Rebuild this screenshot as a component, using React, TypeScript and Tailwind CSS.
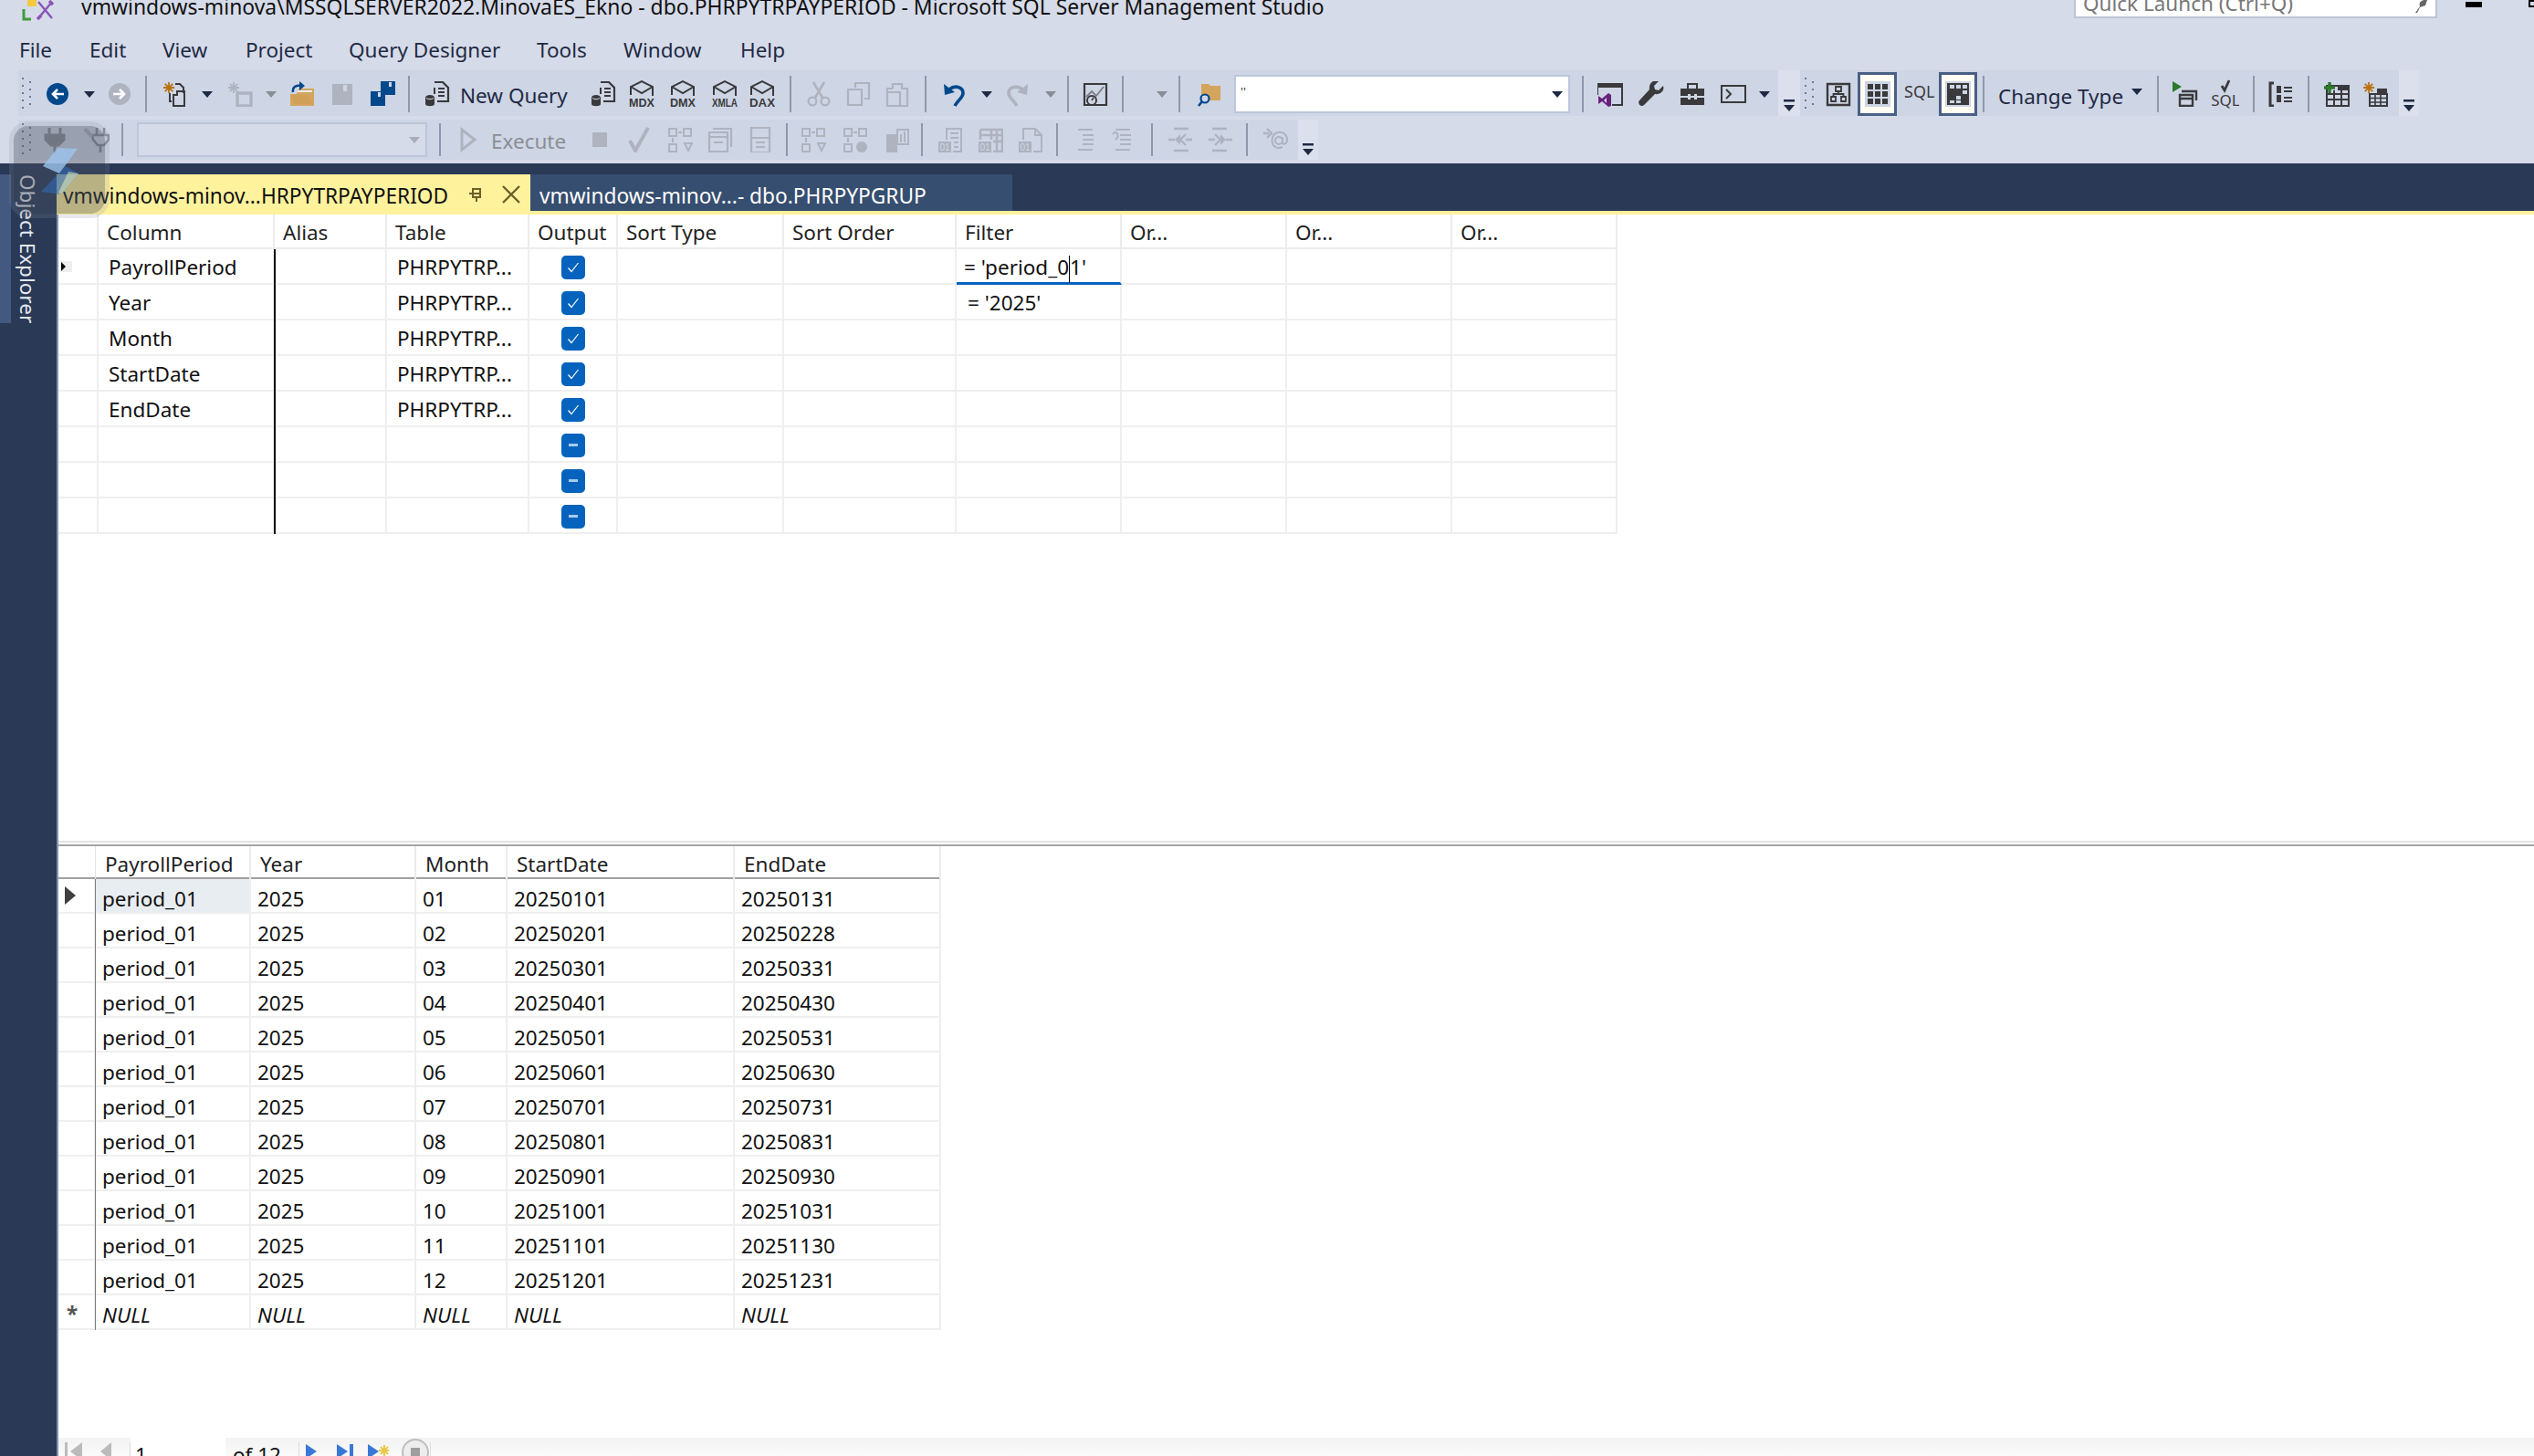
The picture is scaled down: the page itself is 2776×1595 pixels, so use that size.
import type { ReactNode } from 'react'

const DARK = '#3a3a3c'
const OFF = '#aeb3bf'
const BLUE = '#00488c'
const TAN = '#d4a55c'
const ORANGE = '#b8720f'

const LAST = ['31', '28', '31', '30', '31', '30', '31', '31', '30', '31', '30', '31']
const RESULTS = LAST.map((d, i) => {
  const mm = String(i + 1).padStart(2, '0')
  return { month: mm, start: `2025${mm}01`, end: `2025${mm}${d}` }
})
const DESIGN = ['PayrollPeriod', 'Year', 'Month', 'StartDate', 'EndDate', '', '', '']

function I({ className, children }: { className?: string; children: ReactNode }) {
  return <svg className={`w-[28px] h-[28px] shrink-0 ${className ?? ''}`} viewBox="0 0 28 28" fill="none">{children}</svg>
}
type P = { className?: string; c?: string }

function Sep({ className }: { className?: string }) {
  return <div className={`w-[2px] h-[40px] shrink-0 bg-[#8d98ae] ${className ?? ''}`} />
}
function Sep2({ className }: { className?: string }) {
  return <div className={`w-[2px] h-[36px] shrink-0 bg-[#8d98ae] ${className ?? ''}`} />
}
function Dd({ className, c = '#1e2a44' }: P) {
  return <svg className={`w-[12px] h-[7px] shrink-0 ${className ?? ''}`} viewBox="0 0 12 7"><path d="M0 0h12L6 7z" fill={c} /></svg>
}
function Grip({ className }: { className?: string }) {
  return (
    <svg className={`w-[10px] h-[36px] shrink-0 ${className ?? ''}`} viewBox="0 0 10 36" fill="#6f7a92">
      {[0, 8, 16, 24, 32].map(y => <rect key={y} x="0" y={y} width="2" height="2" />)}
      {[4, 12, 20, 28].map(y => <rect key={y} x="8" y={y} width="2" height="2" />)}
    </svg>
  )
}
function Overflow({ className }: { className?: string }) {
  return (
    <svg className={`w-[14px] h-[14px] shrink-0 ${className ?? ''}`} viewBox="0 0 14 14">
      <rect x="1" y="0" width="12" height="2.5" fill="#1e2a44" />
      <path d="M1 6h12l-6 7z" fill="#1e2a44" />
    </svg>
  )
}

function Circle({ className, c = BLUE, dir = 'l' }: P & { dir?: string }) {
  return (
    <I className={className}>
      <circle cx="14" cy="14" r="12" fill={c} />
      <path d={dir === 'l' ? 'M21 14H9M14 9l-5 5 5 5' : 'M7 14h12M14 9l5 5-5 5'} stroke="#fff" strokeWidth="2.6" />
    </I>
  )
}
function Star({ x, y, c = ORANGE }: { x: number; y: number; c?: string }) {
  return <path d={`M${x} ${y - 6}v12M${x - 6} ${y}h12M${x - 4.2} ${y - 4.2}l8.4 8.4M${x - 4.2} ${y + 4.2}l8.4-8.4`} stroke={c} strokeWidth="1.8" />
}
function NewProj({ className }: P) {
  return (
    <I className={className}>
      <Star x={7} y={7} />
      <path d="M14 3h5l4 4v6M12 27h12V11h-8v4h-4zM8 13v9h2" stroke={DARK} strokeWidth="2" />
    </I>
  )
}
function NewProjOff({ className }: P) {
  return (
    <I className={className}>
      <Star x={7} y={7} c={OFF} />
      <path d="M11 13h15v14H11z" stroke={OFF} strokeWidth="3.4" />
    </I>
  )
}
function OpenFolder({ className }: P) {
  return (
    <I className={className}>
      <path d="M1 27V14h7l2-6h17v19z" fill={TAN} />
      <path d="M9 10h16v2H9z" fill="#e9edf5" />
      <path d="M2 15h17l7 10H5z" fill="#d0a058" />
      <path d="M4 12C3 6 8 4 13 5" stroke={BLUE} strokeWidth="2.4" />
      <path d="M11 0l6 5-6 5z" fill={BLUE} />
    </I>
  )
}
function Floppy({ className, c = OFF }: P) {
  return (
    <I className={className}>
      <path d="M3 3h22v23H3zM15 4v7h4V4z" fill={c} fillRule="evenodd" />
    </I>
  )
}
function SaveAll({ className }: P) {
  return (
    <I className={className}>
      <path d="M12 0h16v15H12zM21 1v5h3V1z" fill={BLUE} fillRule="evenodd" />
      <path d="M1 11h16v16H1zM9 12v5h3v-5z" fill={BLUE} fillRule="evenodd" />
    </I>
  )
}
function Query({ className }: P) {
  return (
    <I className={className}>
      <path d="M11 1h9l6 6v15H14" stroke={DARK} strokeWidth="2.2" />
      <path d="M11 7v7M15 8h7M15 12h7M15 16h7" stroke={DARK} strokeWidth="2" />
      <path d="M1 18c0-4 10-4 10 0v7c0 3-10 3-10 0z" fill={DARK} />
      <path d="M2 18.5c2 1.6 6 1.6 8 0" stroke="#d0d7e6" strokeWidth="1" />
    </I>
  )
}
function Cube({ className, t }: P & { t: string }) {
  return (
    <svg className={`w-[34px] h-[32px] shrink-0 ${className ?? ''}`} viewBox="0 0 34 32" fill="none">
      <path d="M5 17V8l12-6 12 6v10M5 8l12 7 12-7" stroke={DARK} strokeWidth="2" />
      <text x="17" y="30" textAnchor="middle" fontSize="12.500" fontWeight="700" textLength="28" lengthAdjust="spacingAndGlyphs" fill={DARK} fontFamily="'Liberation Sans',sans-serif">{t}</text>
    </svg>
  )
}
function Cut({ className }: P) {
  return (
    <I className={className}>
      <path d="M8 1l10 17M20 1L10 18" stroke={OFF} strokeWidth="2.6" />
      <circle cx="7" cy="22" r="4.4" stroke={OFF} strokeWidth="2.2" />
      <circle cx="21" cy="22" r="4.4" stroke={OFF} strokeWidth="2.2" />
    </I>
  )
}
function Copy({ className }: P) {
  return (
    <I className={className}>
      <path d="M11 7V2h15v17h-5M3 9h15v17H3z" stroke={OFF} strokeWidth="2.2" />
    </I>
  )
}
function Paste({ className }: P) {
  return (
    <I className={className}>
      <path d="M9 8V3h10v5h6v19h-7M3 12h14v15H3z M3 12V8h6" stroke={OFF} strokeWidth="2.2" />
    </I>
  )
}
function Undo({ className, c = BLUE, flip }: P & { flip?: boolean }) {
  return (
    <I className={className}>
      <g transform={flip ? 'translate(28 0) scale(-1 1)' : undefined}>
        <path d="M9 9c6-5 15-3 15 4 0 5-6 8-9 14" stroke={c} strokeWidth="3.6" />
        <path d="M3 3l1 12 11-3z" fill={c} />
      </g>
    </I>
  )
}
function Monitor({ className }: P) {
  return (
    <I className={className}>
      <path d="M2 3h24v23H2z" stroke={DARK} strokeWidth="2.2" />
      <path d="M4 17l6-6 5 5 8-10" stroke="#7a7d85" strokeWidth="1.8" />
      <circle cx="10" cy="21" r="5" fill="#d0d7e6" stroke={DARK} strokeWidth="2" />
      <path d="M10 21l2-3" stroke={DARK} strokeWidth="1.6" />
    </I>
  )
}
function FolderFind({ className }: P) {
  return (
    <I className={className}>
      <path d="M5 3h8l2 2h11v16H5z" fill={TAN} />
      <circle cx="9" cy="19" r="4.5" fill="#d0d7e6" stroke={BLUE} strokeWidth="2.2" />
      <path d="M6 22l-4 5" stroke={BLUE} strokeWidth="2.6" />
    </I>
  )
}
function VsIcon({ className }: P) {
  return (
    <I className={className}>
      <path d="M0 2h28v5H0z" fill={DARK} />
      <path d="M0 7v8M27 7v19H16" stroke={DARK} strokeWidth="2" />
      <path d="M1 16l4 3 7-6 3 2v12l-3 1-7-6-4 3z" fill="#68217a" />
      <path d="M10 18l-3 3 3 3z" fill="#d0d7e6" />
    </I>
  )
}
function Wrench({ className }: P) {
  return (
    <I className={className}>
      <path d="M27 5l-5 5-4-1-1-4 5-5c-6-2-11 2-10 9L1 21c-2 2 0 6 2 6 1 0 2 0 3-1L18 14c6 1 11-4 9-9z" fill={DARK} />
    </I>
  )
}
function Toolbox({ className }: P) {
  return (
    <I className={className}>
      <path d="M9 8V3h10v5" stroke={DARK} strokeWidth="2" />
      <path d="M1 8h26v8h-8v-2h-3v2h-4v-2H9v2H1zM1 18h8v2h3v-2h4v2h3v-2h8v8H1z" fill={DARK} />
    </I>
  )
}
function Cmd({ className }: P) {
  return (
    <I className={className}>
      <path d="M1 5h26v18H1z" stroke={DARK} strokeWidth="2" />
      <path d="M6 9l5 5-5 5" stroke={DARK} strokeWidth="2" />
    </I>
  )
}
function Tree({ className }: P) {
  return (
    <I className={className}>
      <path d="M2 3h24v23H2z" stroke={DARK} strokeWidth="2.4" />
      <path d="M11 6h6v5h-6zM6 17h5v5H6zM17 17h5v5h-5zM14 11v3M8.5 17v-3h11v3" stroke={DARK} strokeWidth="1.8" />
    </I>
  )
}
function Dots() {
  return (
    <I>
      <rect width="28" height="28" fill="#cdd5e4" />
      {[3, 11, 19].flatMap(y => [3, 11, 19].map(x => <rect key={`${x}-${y}`} x={x} y={y} width="6" height="6" fill={DARK} />))}
    </I>
  )
}
function ResultsIcon() {
  return (
    <I>
      <rect width="28" height="28" fill="#cdd5e4" />
      <rect x="2" y="2" width="24" height="24" fill={DARK} />
      <path d="M5 4h5v4H5zM12 4h5v4h-5zM19 4h5v4h-5zM19 10h5v4h-5zM12 16h5v4h-5zM5 21h5v3H5zM12 21h5v3h-5z" fill="#cdd5e4" />
    </I>
  )
}
function RunFile({ className }: P) {
  return (
    <I className={className}>
      <path d="M0 0l10 6-10 6z" fill="#2c7a2c" />
      <path d="M10 11h16v10M8 15h14v12H8zM8 19h14" stroke={DARK} strokeWidth="2.4" />
    </I>
  )
}
function SqlCheck({ className }: P) {
  return (
    <svg className={`w-[30px] h-[32px] shrink-0 ${className ?? ''}`} viewBox="0 0 30 32" fill="none">
      <path d="M11 7l3 5 5-11" stroke={DARK} strokeWidth="2.8" />
      <text x="15" y="29" textAnchor="middle" fontSize="17" fill={DARK} fontFamily="'Noto Sans',sans-serif">SQL</text>
    </svg>
  )
}
function Brackets({ className }: P) {
  return (
    <I className={className}>
      <path d="M6 2H2v25h4" stroke={DARK} strokeWidth="3" />
      <path d="M9 5h5v8H9zM9 15h5v8H9z" fill={DARK} />
      <path d="M17 7h9M17 11h9M17 18h9M17 22h9" stroke={DARK} strokeWidth="2" />
    </I>
  )
}
function AddTable({ className }: P) {
  return (
    <I className={className}>
      <path d="M3 5h24v22H3z" fill="none" stroke={DARK} strokeWidth="2" />
      <path d="M15 5h12v5H15z" fill={DARK} />
      <path d="M3 14h24M3 20h24M11 10v17M19 10v17" stroke={DARK} strokeWidth="2" />
      <path d="M0 7h12M6 1v12" stroke="#2c7a2c" strokeWidth="3.4" />
    </I>
  )
}
function NewTable({ className }: P) {
  return (
    <I className={className}>
      <Star x={7} y={7} />
      <path d="M8 14h19v13H8z" stroke={DARK} strokeWidth="2" />
      <path d="M16 8h11v6H16z" fill={DARK} />
      <path d="M8 18.500h19M8 23h19M14 14v13M20 14v13" stroke={DARK} strokeWidth="1.6" />
    </I>
  )
}

/* disabled icons of the second toolbar */
function Plug({ className }: P) {
  return (
    <I className={className}>
      <path d="M8 1v7M20 1v7M4 9h20v5l-6 6h-8l-6-6zM14 20v8" stroke="#8b8f9b" strokeWidth="3" />
      <path d="M5 10h18v4l-6 5h-6l-6-5z" fill="#8b8f9b" />
    </I>
  )
}
function PlugOff({ className }: P) {
  return (
    <I className={className}>
      <path d="M14 1v7M22 1v7M9 9h18v5l-5 6h-7l-5-6zM18 20v8" stroke="#8b8f9b" strokeWidth="2.6" />
      <path d="M1 2l8 9" stroke={OFF} strokeWidth="4" />
    </I>
  )
}
function Link1({ className }: P) {
  return (
    <I className={className}>
      <path d="M2 2h8v8H2zM18 2h8v8h-8zM2 19h8v8H2zM6 17v-5M12 6h4" stroke={OFF} strokeWidth="2" />
      <path d="M19 18l4 8 4-8z" stroke={OFF} strokeWidth="2" />
    </I>
  )
}
function Link2({ className }: P) {
  return (
    <I className={className}>
      <path d="M2 2h8v8H2zM18 2h8v8h-8zM2 19h8v8H2zM6 17v-5M12 6h4" stroke={OFF} strokeWidth="2" />
      <circle cx="21" cy="22" r="6" fill={OFF} />
    </I>
  )
}
function Panes({ className }: P) {
  return (
    <I className={className}>
      <path d="M6 2h20v20M2 6h20v21H2zM2 11h20M7 17h10" stroke={OFF} strokeWidth="2.2" />
    </I>
  )
}
function Form({ className }: P) {
  return (
    <I className={className}>
      <path d="M4 1h20v27H4zM4 12h20M9 17h10M9 22h10" stroke={OFF} strokeWidth="2.2" />
    </I>
  )
}
function Server({ className }: P) {
  return (
    <I className={className}>
      <path d="M3 8h12v20H3z" fill={OFF} />
      <path d="M15 3h12v16H15zM19 8v9M23 5v12" stroke={OFF} strokeWidth="2" />
    </I>
  )
}
function Bin({ className, v }: P & { v: number }) {
  return (
    <I className={className}>
      <rect x="1" y="16" width="14" height="12" fill={OFF} />
      <text x="8" y="26" textAnchor="middle" fontSize="10" fill="#d0d7e6" fontFamily="'Liberation Sans',sans-serif">01</text>
      {v === 0 && <path d="M10 14V2h16v25H17M14 7h9M14 12h9M18 17h5M18 22h5" stroke={OFF} strokeWidth="2" />}
      {v === 1 && <path d="M3 3h24v24H17M3 3v11M3 9h24M15 3v11M21 3v24M17 16h10" stroke={OFF} strokeWidth="2.6" />}
      {v === 2 && <path d="M6 14V2h13l7 7v18H17M19 2v7h7" stroke={OFF} strokeWidth="2" />}
    </I>
  )
}
function Lines({ className, arrow }: P & { arrow?: boolean }) {
  return (
    <I className={className}>
      <path d="M5 3h16M10 9h12M10 14h12M10 19h12M5 25h16" stroke={OFF} strokeWidth="2" />
      {arrow && <path d="M2 8c3-5 7 0 5 4l-2 2" stroke={OFF} strokeWidth="2" />}
    </I>
  )
}
function Indent({ className, flip }: P & { flip?: boolean }) {
  return (
    <I className={className}>
      <g transform={flip ? 'translate(28 0) scale(-1 1)' : undefined}>
        <path d="M7 2h16M7 26h16M1 14h7M20 14h7M20 8l-6 6 6 6" stroke={OFF} strokeWidth="2.4" />
        <path d="M14 8l-6 6 6 6z" fill={OFF} />
      </g>
    </I>
  )
}
function AtMail({ className }: P) {
  return (
    <I className={className}>
      <path d="M1 7h6M5 2l5 5-5 5" stroke={OFF} strokeWidth="2.4" />
      <circle cx="18" cy="15" r="4" stroke={OFF} strokeWidth="2" />
      <path d="M22 11v6c0 3 5 2 5-3 0-6-5-9-10-8-6 1-8 9-5 14 2 3 6 4 10 2" stroke={OFF} strokeWidth="2" />
    </I>
  )
}

function CheckBox({ on }: { on: boolean }) {
  return (
    <div className="w-[26px] h-[26px] rounded-[5px] bg-[#0563bd] flex items-center justify-center">
      {on ? (
        <svg className="w-[16px] h-[16px]" viewBox="0 0 16 16" fill="none"><path d="M2.500 8.500l3.500 4L13.500 3" stroke="#fff" strokeWidth="1.2" /></svg>
      ) : (
        <div className="w-[10px] h-[3px] bg-[#a9cbeb]" />
      )}
    </div>
  )
}

const DC = 'border-r-2 border-b-2 border-[#efefef]'
const HEAD = 'pl-[9px] border-r-2 border-b-2 border-[#ececec] leading-[40px]'

function DesignGrid() {
  return (
    <div className="relative grid grid-cols-[44px_193px_123px_156px_97px_182px_189px_181px_181px_181px_181px] grid-rows-[38px] auto-rows-[39px] w-[1708px] text-[22.5px] leading-[40px] text-[#111]">
      <div className={HEAD} />
      {['Column', 'Alias', 'Table', 'Output', 'Sort Type', 'Sort Order', 'Filter', 'Or...', 'Or...', 'Or...'].map((h, i) => (
        <div key={i} className={`${HEAD} text-[#1f1f1f]`}>{h}</div>
      ))}
      {DESIGN.map((name, r) => (
        <div key={r} className="contents">
          <div className={`${DC} flex items-center pl-[2px]`}>
            {r === 0 && (
              <div className="w-[13px] h-[12px] bg-[#eeeeee] flex items-center">
                <div className="w-0 h-0 border-y-[5px] border-y-transparent border-l-[5px] border-l-black ml-[1px]" />
              </div>
            )}
          </div>
          <div className={`${DC} pl-[11px]`}>{name}</div>
          <div className={DC} />
          <div className={`${DC} pl-[11px]`}>{name ? 'PHRPYTRP...' : ''}</div>
          <div className={`${DC} flex items-center justify-center pl-[1px] pt-[2px]`}><CheckBox on={name !== ''} /></div>
          <div className={DC} />
          <div className={DC} />
          {r === 0 ? (
            <div className="border-r-2 border-r-[#efefef] border-b-[3px] border-b-[#0563bd] pl-[8px] whitespace-pre">= 'period_0<span className="inline-block w-[1px] h-[30px] bg-black align-middle" />1'</div>
          ) : (
            <div className={`${DC} pl-[12px] whitespace-pre`}>{r === 1 ? "= '2025'" : ''}</div>
          )}
          <div className={DC} />
          <div className={DC} />
          <div className={DC} />
        </div>
      ))}
      {/* frozen column divider */}
      <div className="absolute left-[236px] top-[38px] bottom-0 w-[2px] bg-[#111]" />
    </div>
  )
}

const RC = 'border-r-2 border-b-2 border-[#efefef] pl-[7px] pt-[5px]'

function ResultRow({ cells, selected, marker, italic }: { cells: string[]; selected?: boolean; marker?: ReactNode; italic?: boolean }) {
  return (
    <div className={`contents ${italic ? 'italic' : ''}`}>
      <div className="border-r-2 border-b-2 border-[#efefef] flex items-center pl-[7px]">{marker}</div>
      {cells.map((t, i) => (
        <div key={i} className={`${RC} ${selected && i === 0 ? 'bg-[#e8edf1]' : ''}`}>{t}</div>
      ))}
    </div>
  )
}

function ResultGrid() {
  return (
    <div className="w-[967px] text-[22.5px] leading-[34px] text-[#111]">
      <div className="grid grid-cols-[41px_170px_181px_100px_249px_226px] h-[36px] border-b-2 border-b-[#a0a0a0] text-[#1f1f1f]">
        <div className="border-r border-[#e4e4e4]" />
        {['PayrollPeriod', 'Year', 'Month', 'StartDate', 'EndDate'].map(h => (
          <div key={h} className="border-r-2 border-[#ececec] pl-[10px] pt-[3px]">{h}</div>
        ))}
      </div>
      <div className="relative grid grid-cols-[41px_170px_181px_100px_249px_226px] auto-rows-[38px]">
        {RESULTS.map((r, i) => (
          <ResultRow
            key={r.month}
            selected={i === 0}
            marker={i === 0 ? <div className="w-0 h-0 border-y-[10px] border-y-transparent border-l-[12px] border-l-[#404040]" /> : null}
            cells={['period_01', '2025', r.month, r.start, r.end]}
          />
        ))}
        <ResultRow italic marker={<span className="not-italic font-bold text-[#555] pl-[2px] pt-[5px]">*</span>} cells={['NULL', 'NULL', 'NULL', 'NULL', 'NULL']} />
        <div className="absolute left-[40px] top-0 bottom-0 w-[1px] bg-[#7d7d7d]" />
      </div>
    </div>
  )
}

function NavBar() {
  return (
    <div className="h-[20px] shrink-0 overflow-hidden bg-gradient-to-b from-[#f3f3f3] to-[#fafafa] flex items-start text-[22.5px] leading-[26px] text-[#111]">
      <svg className="w-[22px] h-[20px] ml-[6px] mt-[5px] shrink-0" viewBox="0 0 22 20"><path d="M1 0h3v20H1zM20 0v20L7 10z" fill="#bbbbbb" /></svg>
      <svg className="w-[16px] h-[20px] ml-[16px] mt-[5px] shrink-0" viewBox="0 0 16 20"><path d="M14 0v20L2 10z" fill="#bbbbbb" /></svg>
      <div className="w-[1px] h-[20px] bg-[#dddddd] ml-[18px] mt-[5px]" />
      <div className="w-[104px] h-[20px] bg-white pl-[5px] pt-[6px] shrink-0">1</div>
      <div className="ml-[8px] pt-[6px] w-[72px] shrink-0">of 12</div>
      <div className="w-[1px] h-[20px] bg-[#dddddd] mt-[5px]" />
      <svg className="w-[14px] h-[16px] ml-[6px] mt-[7px] shrink-0" viewBox="0 0 14 16"><path d="M1 0l12 8-12 8z" fill="#3a78d8" /></svg>
      <svg className="w-[22px] h-[16px] ml-[20px] mt-[7px] shrink-0" viewBox="0 0 22 16"><path d="M1 0l12 8-12 8zM15 0h4v16h-4z" fill="#3a78d8" /></svg>
      <svg className="w-[24px] h-[16px] ml-[12px] mt-[7px] shrink-0" viewBox="0 0 24 16">
        <path d="M1 0l12 8-12 8z" fill="#3a78d8" />
        <path d="M19 1v13M13 7h12M15 3l8 8M15 11l8-8" stroke="#e8c84a" strokeWidth="2" />
      </svg>
      <svg className="w-[32px] h-[24px] ml-[13px] mt-[0px] shrink-0" viewBox="0 0 32 24">
        <circle cx="16" cy="16" r="14" fill="#ededed" stroke="#bdbdbd" strokeWidth="2" />
        <rect x="11" y="11" width="10" height="10" fill="#9e9e9e" />
      </svg>
      <div className="w-[1px] h-[20px] bg-[#dddddd] mt-[5px]" />
    </div>
  )
}

function AppLogo({ className }: P) {
  return (
    <svg className={`w-[36px] h-[24px] shrink-0 ${className ?? ''}`} viewBox="0 0 36 24" fill="none">
      <path d="M6 0h10v7H6z" fill="#f4c93e" />
      <path d="M2 10v11h8" stroke="#3f9b3f" strokeWidth="3" />
      <path d="M18 2l15 18M33 2L18 20" stroke="#8a55b5" strokeWidth="2.4" />
      <path d="M30 1l4 4M17 21l4-4" stroke="#8a55b5" strokeWidth="3.4" />
    </svg>
  )
}

export default function App() {
  return (
    <div className="relative w-[2776px] h-[1595px] overflow-hidden bg-[#d6dbe9] flex flex-col font-['Noto_Sans',sans-serif] text-[22.5px] text-[#1e2a44]">
      {/* title bar */}
      <div className="h-[35px] shrink-0 relative flex items-start pl-[24px]">
        <AppLogo />
        <div className="ml-[29px] -mt-[7px] leading-[30px] text-[22.9px] text-[#111] whitespace-nowrap">vmwindows-minova\MSSQLSERVER2022.MinovaES_Ekno - dbo.PHRPYTRPAYPERIOD - Microsoft SQL Server Management Studio</div>
        <div className="absolute left-[2272px] top-0 w-[398px] h-[20px] bg-white border-r-2 border-b-2 border-l-2 border-[#bcc4d6] overflow-hidden pl-[8px] text-[#777] -mt-0">
          <div className="-mt-[11px] leading-[30px]">Quick Launch (Ctrl+Q)</div>
          <svg className="absolute right-[8px] top-0 w-[22px] h-[14px]" viewBox="0 0 22 14"><path d="M8 14l5-7c-2-5 3-8 8-7l-2 6-6 2-3 6z" fill="#666" /></svg>
        </div>
        <div className="absolute left-[2701px] top-[2px] w-[18px] h-[6px] bg-black" />
        <div className="absolute left-[2770px] top-[0px] w-[10px] h-[8px] border-2 border-black" />
      </div>

      {/* menu */}
      <div className="h-[40px] shrink-0 flex items-center pl-[21px] text-[#1e2a44]">
        <div className="w-[77px]">File</div>
        <div className="w-[80px]">Edit</div>
        <div className="w-[91px]">View</div>
        <div className="w-[113px]">Project</div>
        <div className="w-[206px]">Query Designer</div>
        <div className="w-[95px]">Tools</div>
        <div className="w-[128px]">Window</div>
        <div>Help</div>
      </div>

      {/* standard toolbars */}
      <div className="mt-[2px] h-[50px] shrink-0 flex pl-[20px]">
        <div className="w-[1928px] pt-[2px] bg-[#ced5e5] flex items-center">
          <Grip className="ml-[4px]" />
          <Circle className="ml-[15px]" />
          <Dd className="ml-[15px]" />
          <Circle className="ml-[13px]" c={OFF} dir="r" />
          <Sep className="ml-[14px]" />
          <NewProj className="ml-[17px]" />
          <Dd className="ml-[15px]" />
          <NewProjOff className="ml-[16px]" />
          <Dd className="ml-[14px]" c="#8a8d95" />
          <OpenFolder className="ml-[14px]" />
          <Floppy className="ml-[16px]" />
          <SaveAll className="ml-[16px]" />
          <Sep className="ml-[14px]" />
          <Query className="ml-[16px]" />
          <div className="ml-[11px] mt-[3px] w-[122px] shrink-0 whitespace-nowrap">New Query</div>
          <Query className="ml-[21px]" />
          <Cube className="ml-[11px]" t="MDX" />
          <Cube className="ml-[11px]" t="DMX" />
          <Cube className="ml-[12px]" t="XMLA" />
          <Cube className="ml-[7px]" t="DAX" />
          <Sep className="ml-[13px]" />
          <Cut className="ml-[16px]" />
          <Copy className="ml-[15px]" />
          <Paste className="ml-[15px]" />
          <Sep className="ml-[16px]" />
          <Undo className="ml-[16px]" />
          <Dd className="ml-[16px]" />
          <Undo className="ml-[14px]" c={OFF} flip />
          <Dd className="ml-[16px]" c="#8a8d95" />
          <Sep className="ml-[12px]" />
          <Monitor className="ml-[15px]" />
          <Sep className="ml-[15px]" />
          <Dd className="ml-[36px]" c="#8a8d95" />
          <Sep className="ml-[12px]" />
          <FolderFind className="ml-[18px]" />
          <div className="ml-[13px] w-[368px] h-[42px] shrink-0 bg-white border-2 border-[#bcc6da] flex items-center justify-between pl-[5px] pr-[6px]">
            <span className="text-[13px] leading-none -mt-[6px] text-[#333]">''</span>
            <Dd />
          </div>
          <Sep className="ml-[13px]" />
          <VsIcon className="ml-[15px]" />
          <Wrench className="ml-[17px]" />
          <Toolbox className="ml-[17px]" />
          <Cmd className="ml-[17px]" />
          <Dd className="ml-[14px]" />
        </div>
        <div className="w-[24px] flex justify-center bg-[#dbe0ec]"><Overflow className="mt-[32px]" /></div>
        <div className="w-[656px] pt-[2px] bg-[#ced5e5] flex items-center">
          <Grip className="ml-[5px]" />
          <Tree className="ml-[13px]" />
          <div className="ml-[7px] w-[43px] h-[48px] shrink-0 border-[3px] border-[#4a5f85] bg-[#fffcf4] flex items-center justify-center"><Dots /></div>
          <div className="ml-[8px] w-[29px] shrink-0 text-[18px] text-[#3a3a3c] -mt-[6px]">SQL</div>
          <div className="ml-[9px] w-[42px] h-[48px] shrink-0 border-[3px] border-[#4a5f85] bg-[#fffcf4] flex items-center justify-center"><ResultsIcon /></div>
          <Sep className="ml-[6px]" />
          <div className="ml-[15px] mt-[5px] w-[140px] shrink-0 whitespace-nowrap">Change Type</div>
          <Dd className="ml-[6px] -mt-[6px]" />
          <Sep className="ml-[16px]" />
          <RunFile className="ml-[15px]" />
          <SqlCheck className="ml-[15px]" />
          <Sep className="ml-[15px]" />
          <Brackets className="ml-[15px]" />
          <Sep className="ml-[15px]" />
          <AddTable className="ml-[16px]" />
          <NewTable className="ml-[14px]" />
        </div>
        <div className="w-[22px] flex justify-center bg-[#dbe0ec]"><Overflow className="mt-[32px]" /></div>
      </div>

      <div className="mt-[4px] h-[44px] shrink-0 flex pl-[20px]">
        <div className="w-[1402px] bg-[#ced5e5] flex items-center">
          <Grip className="ml-[4px]" />
          <Plug className="ml-[12px]" />
          <PlugOff className="ml-[18px]" />
          <Sep2 className="ml-[13px]" />
          <div className="ml-[15px] w-[318px] h-[38px] shrink-0 bg-[#d6dbe9] border-2 border-[#bcc6da] flex items-center justify-end pr-[6px]"><Dd c="#a8adb9" /></div>
          <Sep2 className="ml-[13px]" />
          <svg className="ml-[20px] w-[20px] h-[28px] shrink-0" viewBox="0 0 20 28" fill="none"><path d="M3 3l14 11L3 25z" stroke={OFF} strokeWidth="3" /></svg>
          <div className="ml-[15px] mt-[4px] w-[84px] shrink-0 text-[#8b8e95]">Execute</div>
          <svg className="ml-[21px] w-[28px] h-[28px] shrink-0" viewBox="0 0 28 28"><rect x="6" y="6" width="16" height="16" fill={OFF} /></svg>
          <svg className="ml-[15px] w-[28px] h-[28px] shrink-0" viewBox="0 0 28 28" fill="none"><path d="M4 15l6 11L24 1" stroke={OFF} strokeWidth="4" /></svg>
          <Link1 className="ml-[17px]" />
          <Panes className="ml-[16px]" />
          <Form className="ml-[16px]" />
          <Sep2 className="ml-[14px]" />
          <Link1 className="ml-[14px]" />
          <Link2 className="ml-[18px]" />
          <Server className="ml-[17px]" />
          <Sep2 className="ml-[13px]" />
          <Bin className="ml-[16px]" v={0} />
          <Bin className="ml-[16px]" v={1} />
          <Bin className="ml-[16px]" v={2} />
          <Sep2 className="ml-[14px]" />
          <Lines className="ml-[17px]" />
          <Lines className="ml-[13px]" arrow />
          <Sep2 className="ml-[16px]" />
          <Indent className="ml-[16px]" />
          <Indent className="ml-[16px]" flip />
          <Sep2 className="ml-[14px]" />
          <AtMail className="ml-[16px]" />
        </div>
        <div className="w-[22px] flex justify-center bg-[#dbe0ec]"><Overflow className="mt-[26px]" /></div>
      </div>

      {/* document well */}
      <div className="mt-[4px] flex-1 min-h-0 flex bg-[#293956]">
        <div className="w-[62px] shrink-0 pt-[12px]">
          <div className="w-[62px] h-[163px] border-l-[12px] border-l-[#43597f] [writing-mode:vertical-rl] text-[22.5px] leading-[26px] text-[#e4e8f0] pr-[19px] whitespace-nowrap">Object Explorer</div>
        </div>
        <div className="flex-1 min-w-0 flex flex-col pt-[12px]">
          <div className="h-[40px] shrink-0 flex items-center leading-[40px] pt-[4px]">
            <div className="w-[519px] h-[40px] -mt-[4px] bg-[#fff29d] flex items-center pl-[7px] text-[22.7px] text-[#111] relative pt-[8px]">
              vmwindows-minov...HRPYTRPAYPERIOD
              <svg className="absolute left-[451px] top-[13px] w-[18px] h-[18px]" viewBox="0 0 18 18" fill="none"><path d="M5 3h8v9H5zM1 8h4M9 12v5" stroke="#6b5f2a" strokeWidth="2" /><path d="M5 8h8" stroke="#6b5f2a" strokeWidth="2" /></svg>
              <svg className="absolute left-[488px] top-[12px] w-[20px] h-[20px]" viewBox="0 0 20 20" fill="none"><path d="M1 1l18 18M19 1L1 19" stroke="#6b5f2a" strokeWidth="2.4" /></svg>
            </div>
            <div className="w-[528px] h-[40px] -mt-[4px] bg-[#364e6f] flex items-center pl-[10px] text-[22.7px] text-white pt-[8px]">vmwindows-minov...- dbo.PHRPYPGRUP</div>
          </div>
          <div className="h-[4px] shrink-0 bg-[#fff29d]" />
          <div className="flex-1 min-h-0 flex flex-col bg-white border-l-2 border-l-[#8293b5]">
            <div className="h-[686px] shrink-0"><DesignGrid /></div>
            <div className="h-[2px] shrink-0 bg-[#e2e2e2]" />
            <div className="h-[2px] shrink-0 bg-white" />
            <div className="h-[2px] shrink-0 bg-[#a4a4a4]" />
            <div className="flex-1 min-h-0"><ResultGrid /></div>
            <NavBar />
          </div>
        </div>
      </div>

      {/* translucent app badge lying over the window */}
      <div className="absolute left-[15px] top-[138px] w-[100px] h-[96px] rounded-[16px] bg-[#4a4f60]/40 ring-[5px] ring-[#8a8f9f]/20 pointer-events-none">
        <svg className="w-full h-full" viewBox="0 0 100 96">
          <path d="M48 24l22 1-20 27-18-8z" fill="#9cc4ee" opacity="0.8" />
          <path d="M57 44l14 8-19 23-22-3z" fill="#2f6fc0" opacity="0.55" />
          <path d="M60 50l11 2-19 23-3-2z" fill="#e6ecb8" opacity="0.55" />
        </svg>
      </div>
    </div>
  )
}
